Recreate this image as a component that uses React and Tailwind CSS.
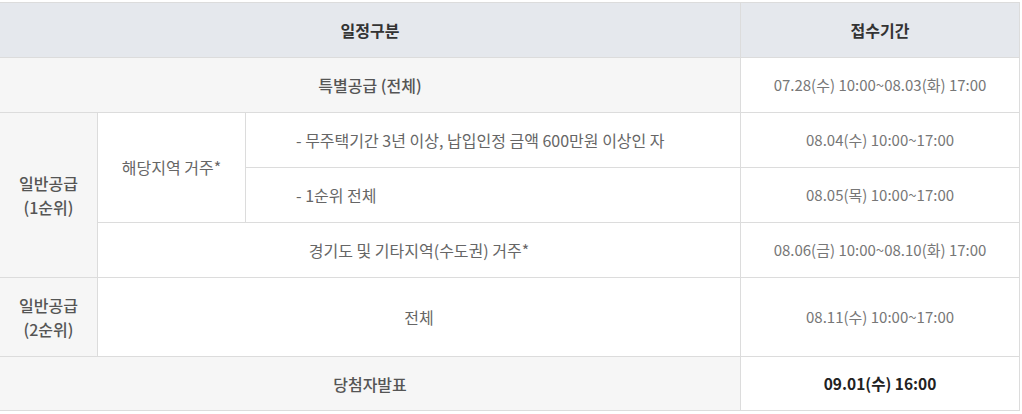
import React from 'react';

const font = { fontFamily: '"Noto Sans CJK KR", "Noto Sans", sans-serif' };

function App() {
  const td = 'border border-[#dcdcdc] text-center align-middle';
  const date = `${td} bg-white text-[#777] text-[15px]`;

  return (
    <div className="w-[1022px] h-[414px] bg-white pt-[2px] overflow-hidden" style={font}>
      <table className="w-[1020px] border-collapse table-fixed -ml-px">
        <colgroup>
          <col className="w-[98px]" />
          <col className="w-[148px]" />
          <col className="w-[495px]" />
          <col className="w-[279px]" />
        </colgroup>
        <thead>
          <tr className="h-[55px] bg-[#e5e8ed]">
            <th colSpan={3} className={`${td} text-[16px] font-bold text-[#333]`}>일정구분</th>
            <th className={`${td} text-[16px] font-bold text-[#333]`}>접수기간</th>
          </tr>
        </thead>
        <tbody>
          <tr className="h-[55px]">
            <td colSpan={3} className={`${td} bg-[#f6f6f6] text-[16px] font-medium text-[#555]`}>특별공급 (전체)</td>
            <td className={date}>07.28(수) 10:00~08.03(화) 17:00</td>
          </tr>
          <tr className="h-[55px]">
            <td rowSpan={3} className={`${td} bg-[#f6f6f6] text-[16px] font-medium text-[#555] leading-[24px]`}>
              일반공급
              <br />
              (1순위)
            </td>
            <td rowSpan={2} className={`${td} bg-white text-[16px] text-[#666] pb-[2px]`}>해당지역 거주*</td>
            <td className={`${td} bg-white text-[16px] text-[#666] text-left pl-[50px]`}>
              - 무주택기간 3년 이상, 납입인정 금액 600만원 이상인 자
            </td>
            <td className={date}>08.04(수) 10:00~17:00</td>
          </tr>
          <tr className="h-[55px]">
            <td className={`${td} bg-white text-[16px] text-[#666] text-left pl-[50px]`}>- 1순위 전체</td>
            <td className={date}>08.05(목) 10:00~17:00</td>
          </tr>
          <tr className="h-[55px]">
            <td colSpan={2} className={`${td} bg-white text-[16px] text-[#666]`}>경기도 및 기타지역(수도권) 거주*</td>
            <td className={date}>08.06(금) 10:00~08.10(화) 17:00</td>
          </tr>
          <tr className="h-[79px]">
            <td className={`${td} bg-[#f6f6f6] text-[16px] font-medium text-[#555] leading-[24px]`}>
              일반공급
              <br />
              (2순위)
            </td>
            <td colSpan={2} className={`${td} bg-white text-[16px] text-[#666]`}>전체</td>
            <td className={date}>08.11(수) 10:00~17:00</td>
          </tr>
          <tr className="h-[54px]">
            <td colSpan={3} className={`${td} bg-[#f6f6f6] text-[16px] font-medium text-[#555]`}>당첨자발표</td>
            <td className={`${td} bg-white text-[15.5px] font-bold text-[#222]`}>09.01(수) 16:00</td>
          </tr>
        </tbody>
      </table>
    </div>
  );
}

export default App;
